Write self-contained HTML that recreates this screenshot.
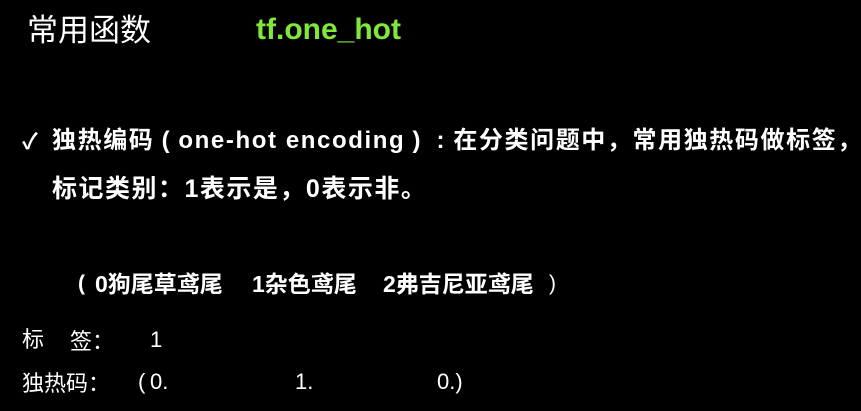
<!DOCTYPE html>
<html><head><meta charset="utf-8"><style>
body{margin:0;width:861px;height:411px;background:#000;overflow:hidden;position:relative;font-family:"Liberation Sans","Noto Sans CJK SC",sans-serif;color:#fff}
.a{position:absolute;white-space:nowrap;line-height:1}
.b{font-weight:bold}
.c{font-family:"Noto Sans CJK SC",sans-serif}
.p{display:inline-block;width:24px;text-align:center}
</style></head><body>
<div class="a" style="left:27px;top:15px;font-size:31px">常用函数</div>
<div class="a b" style="left:256px;top:15px;font-size:30px;color:#80e838">tf.one_hot</div>
<div class="a b" style="left:22px;top:131px;font-size:22px">✓</div>
<div class="a b" style="left:52px;top:129px;font-size:24px;letter-spacing:1.6px">独热编码<span class="p">(</span>one-hot encoding<span class="p">)</span><span class="p">:</span>在分类问题中，常用独热码做标签，</div>
<div class="a b" style="left:52px;top:175px;font-size:25px;letter-spacing:1.5px">标记类别<span class="c">：</span>1表示是，0表示非。</div>
<div class="a b" style="left:78px;top:273px;font-size:21px">(</div>
<div class="a b" style="left:95px;top:273px;font-size:23px">0狗尾草鸢尾</div>
<div class="a b" style="left:252px;top:273px;font-size:23px">1杂色鸢尾</div>
<div class="a b" style="left:383px;top:273px;font-size:23px">2弗吉尼亚鸢尾</div>
<div class="a" style="left:549px;top:273px;font-size:21px">)</div>
<div class="a" style="left:22px;top:329px;font-size:22px">标</div>
<div class="a" style="left:70px;top:329px;font-size:22px">签<span class="c">：</span></div>
<div class="a" style="left:150px;top:329px;font-size:22px">1</div>
<div class="a" style="left:22px;top:371px;font-size:22px">独热码<span class="c">：</span></div>
<div class="a" style="left:138px;top:371px;font-size:22px">(</div>
<div class="a" style="left:150px;top:371px;font-size:22px">0.</div>
<div class="a" style="left:295px;top:371px;font-size:22px">1.</div>
<div class="a" style="left:437px;top:371px;font-size:22px">0.)</div>
</body></html>
